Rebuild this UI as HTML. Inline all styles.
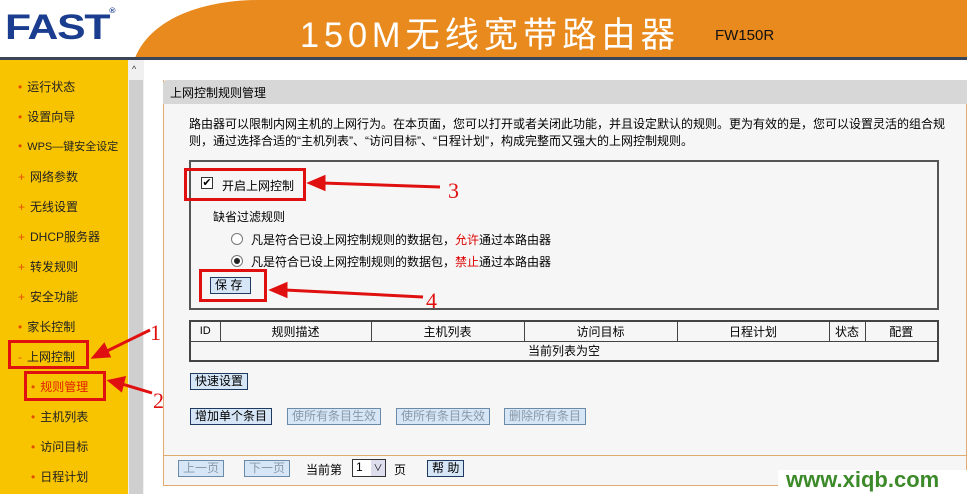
<!DOCTYPE html>
<html><head><meta charset="utf-8"><style>
*{margin:0;padding:0;box-sizing:border-box}
body{width:967px;height:494px;overflow:hidden;background:#fff;font-family:"Liberation Sans","Noto Sans CJK SC",sans-serif;font-size:12px;color:#000;position:relative}
.a{position:absolute}
.side{left:0;top:60px;width:128px;height:434px;background:#f8c400}
.it{position:absolute;left:18px;font-size:12px;color:#222;white-space:nowrap}
.it b{color:#e05000;font-weight:normal;margin-right:5px}
.btn{position:absolute;height:17px;border:1px solid #1f3a60;background:#d6e6f6;font-size:12px;line-height:15px;padding:0 4px;white-space:nowrap}
.dis{color:#8899aa;border-color:#6a8aa8}
.red{position:absolute;border:3px solid #e01010}
td{border:1px solid #444;text-align:center;height:20px;font-size:12px}
</style></head><body>
<svg class="a" style="left:0;top:0" width="967" height="60">
<path d="M135 58 C150 20 200 0 260 0 L967 0 L967 58 Z" fill="#e88a1e"/>
<rect x="0" y="57" width="967" height="3" fill="#3a4658"/>
</svg>
<div class="a" style="left:5px;top:8px;font:bold 35px 'Liberation Sans',sans-serif;color:#1b3d8f;letter-spacing:-1px;transform:scaleX(1.22);transform-origin:left">FAST<span style="font-size:7px;vertical-align:top">®</span></div>
<div class="a" style="left:300px;top:7px;font-size:35px;color:#fff;letter-spacing:5px;white-space:nowrap;transform:scaleX(0.98);transform-origin:left">150M无线宽带路由器</div>
<div class="a" style="left:715px;top:27px;font-size:15px;color:#111">FW150R</div>
<div class="a side">
<div class="it" style="top:18px"><b>•</b>运行状态</div>
<div class="it" style="top:48px"><b>•</b>设置向导</div>
<div class="it" style="top:78px"><b>•</b><span style="font-size:11px">WPS—键安全设定</span></div>
<div class="it" style="top:108px"><b>+</b>网络参数</div>
<div class="it" style="top:138px"><b>+</b>无线设置</div>
<div class="it" style="top:168px"><b>+</b>DHCP服务器</div>
<div class="it" style="top:198px"><b>+</b>转发规则</div>
<div class="it" style="top:228px"><b>+</b>安全功能</div>
<div class="it" style="top:258px"><b>•</b>家长控制</div>
<div class="it" style="top:288px"><b>-</b>上网控制</div>
<div class="it" style="top:318px;left:31px;color:#e02000"><b>•</b>规则管理</div>
<div class="it" style="top:348px;left:31px"><b>•</b>主机列表</div>
<div class="it" style="top:378px;left:31px"><b>•</b>访问目标</div>
<div class="it" style="top:408px;left:31px"><b>•</b>日程计划</div>
</div>
<div class="a" style="left:128px;top:60px;width:16px;height:434px;background:#f0f0f0"></div>
<div class="a" style="left:129px;top:80px;width:14px;height:414px;background:#cfcfcf"></div>
<div class="a" style="left:132px;top:64px;font-size:9px;color:#333">^</div>
<div class="a" style="left:163px;top:80px;width:804px;height:406px;background:#f6f6f6;border:1px solid #e0aa70;border-top:none"></div>
<div class="a" style="left:163px;top:80px;width:804px;height:24px;background:#d7d7d7;border-radius:4px 0 0 0;padding:4px 7px;font-size:12px">上网控制规则管理</div>
<div class="a" style="left:163px;top:455px;width:804px;height:1px;background:#e0aa70"></div>
<div class="a" style="left:189px;top:116px;width:760px;line-height:17px;font-size:12px">路由器可以限制内网主机的上网行为。在本页面，您可以打开或者关闭此功能，并且设定默认的规则。更为有效的是，您可以设置灵活的组合规则，通过选择合适的“主机列表”、“访问目标”、“日程计划”，构成完整而又强大的上网控制规则。</div>
<div class="a" style="left:189px;top:160px;width:750px;height:150px;border:2px solid #555"></div>
<div class="a" style="left:201px;top:177px;width:12px;height:12px;border:1px solid #333;background:#fff;font-size:11px;line-height:10px;text-align:center">✔</div>
<div class="a" style="left:222px;top:177px">开启上网控制</div>
<div class="a" style="left:213px;top:208px">缺省过滤规则</div>
<div class="a" style="left:231px;top:233px;width:12px;height:12px;border:1px solid #777;border-radius:50%;background:#fff"></div>
<div class="a" style="left:251px;top:231px">凡是符合已设上网控制规则的数据包，<span style="color:#d00">允许</span>通过本路由器</div>
<div class="a" style="left:231px;top:255px;width:12px;height:12px;border:1px solid #777;border-radius:50%;background:#fff"><div style="margin:2px;width:6px;height:6px;border-radius:50%;background:#222"></div></div>
<div class="a" style="left:251px;top:253px">凡是符合已设上网控制规则的数据包，<span style="color:#d00">禁止</span>通过本路由器</div>
<div class="btn" style="left:210px;top:277px;width:41px">保 存</div>
<table class="a" style="left:189px;top:320px;width:750px;border-collapse:collapse;border:2px solid #444;table-layout:fixed">
<tr><td style="width:30px;font-size:11px">ID</td><td style="width:151px">规则描述</td><td style="width:153px">主机列表</td><td style="width:153px">访问目标</td><td style="width:152px">日程计划</td><td style="width:36px">状态</td><td>配置</td></tr>
<tr><td colspan="7">当前列表为空</td></tr></table>
<div class="btn" style="left:190px;top:373px">快速设置</div>
<div class="btn" style="left:190px;top:408px">增加单个条目</div>
<div class="btn dis" style="left:287px;top:408px">使所有条目生效</div>
<div class="btn dis" style="left:396px;top:408px">使所有条目失效</div>
<div class="btn dis" style="left:504px;top:408px">删除所有条目</div>
<div class="btn dis" style="left:178px;top:460px">上一页</div>
<div class="btn dis" style="left:244px;top:460px">下一页</div>
<div class="a" style="left:306px;top:461px">当前第</div>
<div class="a" style="left:352px;top:459px;width:34px;height:18px;border:1px solid #333;background:#fff;font-size:12px;padding-left:3px">1<span style="position:absolute;right:0;top:0;width:14px;height:16px;background:#dde;font-size:9px;text-align:center;line-height:16px">∨</span></div>
<div class="a" style="left:394px;top:461px">页</div>
<div class="btn" style="left:427px;top:460px">帮 助</div>
<div class="red" style="left:184px;top:168px;width:122px;height:33px"></div>
<div class="red" style="left:199px;top:269px;width:68px;height:33px"></div>
<div class="red" style="left:8px;top:340px;width:81px;height:29px"></div>
<div class="red" style="left:24px;top:371px;width:82px;height:30px"></div>
<svg class="a" style="left:0;top:0" width="967" height="494">
<g stroke="#e01010" stroke-width="3" fill="#e01010">
<line x1="440" y1="187" x2="322" y2="183"/><path d="M310 183 L324 177 L324 189Z"/>
<line x1="423" y1="297" x2="285" y2="290"/><path d="M272 290 L286 284 L286 296Z"/>
<line x1="150" y1="330" x2="105" y2="352"/><path d="M94 357 L104 345 L109 356Z"/>
<line x1="152" y1="393" x2="122" y2="384"/><path d="M110 381 L124 378 L121 390Z"/>
</g>
<g fill="#e01010" font-family="Liberation Serif,serif" font-size="22">
<text x="448" y="198">3</text><text x="426" y="308">4</text><text x="150" y="340">1</text><text x="153" y="408">2</text></g>
</svg>
<div class="a" style="left:778px;top:470px;width:189px;height:24px;background:#fff"></div>
<div class="a" style="left:786px;top:467px;font:bold 22px 'Liberation Sans',sans-serif;color:#3d8a2a">www.xiqb.com</div>
</body></html>
